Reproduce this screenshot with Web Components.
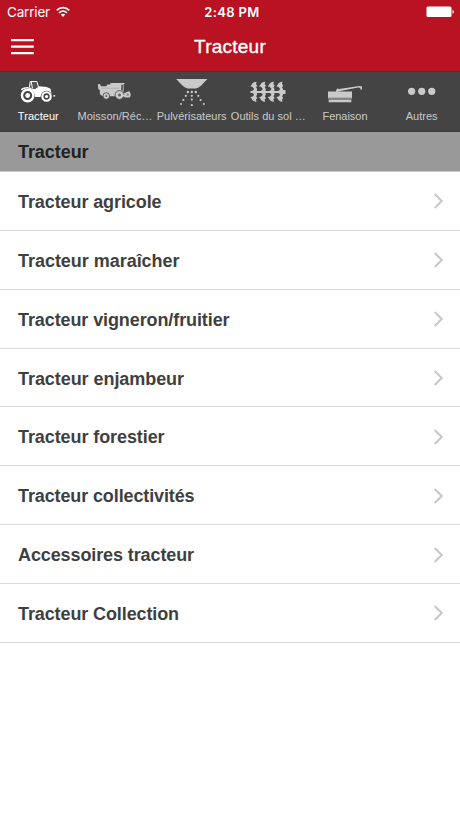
<!DOCTYPE html>
<html lang="fr"><head><meta charset="utf-8"><title>Tracteur</title>
<style>html,body{margin:0;height:100%;background:#fff}body{font-family:"Liberation Sans",Arial,sans-serif;overflow:hidden}</style></head>
<body>
<app-screen>
<status-bar slot="top"></status-bar>
<nav-bar slot="top" label="Tracteur"></nav-bar>
<tab-strip slot="top">
<tab-item label="Tracteur" w="41" active><svg viewBox="18.33 76 40 30"><path fill="currentColor" d="M39 86.3l8 .8 3.8 1.6 1.2 5.3-1.5-.2a5.6 5.6 0 0 0-9.6 3.2h-5.4c-.2-4.5-3-8-7.5-8.4-2.2-.1-4.3.6-5.8 1.8l-1-1.3c1.8-1.4 4-2.2 6.7-2.2l4.6 2.4h3.3z"/><path fill="#555" stroke="currentColor" stroke-width="1" d="M29.6 87.5l1-6h6.6l1.7 5.8-3.3 2.2h-3zM31.5 81.5l1.3 7"/><circle cx="28" cy="95.5" r="5.7" fill="#444" stroke="currentColor" stroke-width="2.4"/><circle cx="28" cy="95.5" r="2.4" fill="currentColor"/><circle cx="46.9" cy="96.5" r="5.7" fill="#444"/><circle cx="46.9" cy="96.5" r="4.2" fill="none" stroke="currentColor" stroke-width="2.1"/><circle cx="46.9" cy="96.5" r="1.6" fill="currentColor"/><circle cx="54.6" cy="95.8" r=".9" fill="currentColor"/></svg></tab-item>
<tab-item label="Moisson/Réc…" w="75"><svg viewBox="95 76 40 30"><path fill="currentColor" d="M97.8 84.2l2.2-.3.8 2.3h5.7l.7-1.8h3.3v-1.5h14v1.2h-.9v7.3l-1.3.9 2.8.9 1.5 1.3-.5 1.2-2.6-.2-1.2.8H102.5l-2.7-2.3V90l-1.4-.8z"/><path fill="#444" d="M121.4 84.8h1.4v5.6h-1.6z"/><path stroke="#999" stroke-width=".5" d="M101 88.2h18"/><g fill="currentColor" stroke="#444" stroke-width=".8"><circle cx="106.3" cy="96" r="3.3"/><circle cx="119.5" cy="95" r="4.4"/></g><circle cx="119.5" cy="95" r="1.5" fill="#666"/><circle cx="106.3" cy="96" r="1" fill="#666"/><circle cx="127.8" cy="94.7" r="2" fill="#777" stroke="currentColor" stroke-width="1.8"/><path fill="none" stroke="currentColor" stroke-width="1.5" d="M122 94.5l4 2.5M128 92.5l1.5-1"/></svg></tab-item>
<tab-item label="Pulvérisateurs" w="70"><svg viewBox="171.67 76 40 30"><path fill="currentColor" d="M175.7 79h31.4c-3.8 3.6-6.7 8.3-11.6 9.5h-8.2c-4.9-1.3-7.6-6-11.6-9.5z"/><g fill="currentColor"><circle cx="187.5" cy="92" r="1.2"/><circle cx="191.5" cy="92" r="1.2"/><circle cx="195.5" cy="92" r="1.2"/><circle cx="185.5" cy="95.8" r="1.1"/><circle cx="191.5" cy="95.8" r="1.1"/><circle cx="198" cy="95.8" r="1.1"/><circle cx="183" cy="100" r="1.1"/><circle cx="191.5" cy="99.6" r="1.1"/><circle cx="200.3" cy="100" r="1.1"/><circle cx="180.7" cy="104" r="1"/><circle cx="191.5" cy="105" r="1.1"/><circle cx="203.5" cy="104" r="1"/></g></svg></tab-item>
<tab-item label="Outils du sol …" w="75"><svg viewBox="248.33 76 40 30"><defs><path id="tine" d="M256.9 81.8c-2.8.2-4.4 1.4-4.9 3l-1.4 1.8 2 .2 1.7 2-.3 1.3-2.5 1.2h5.8v-2.6l-.9-1.4 1.2-1.6-1.3-1.6zM256.9 101.8c-2.8-.2-4.4-1.4-4.9-3l-1.4-1.8 2-.2 1.7-1.7-.3-1.3-2.5-1.2h5.8v2.5l-.9 1.2 1.2 1.6-1.3 1.6z"/></defs><g fill="currentColor"><path d="M250.8 91h31v-1.1h4v4.2h-4v-1.2h-31z"/><use href="#tine"/><use href="#tine" x="8.7"/><use href="#tine" x="17.4"/><use href="#tine" x="26"/></g></svg></tab-item>
<tab-item label="Fenaison" w="45"><svg viewBox="325 76 40 30"><path fill="currentColor" d="M328 91.6h24v7h-24zM328.7 99.4h22.6v2.9h-22.6zM335.7 91.8l1.3-3.2 2 .5 20.5-3 2.5.4v3h-1.7v-1.6l-2-.3-18 3.5z"/><path stroke="#999" stroke-width=".5" d="M328 97.5h24"/></svg></tab-item>
<tab-item label="Autres" w="32"><svg viewBox="401.67 76 40 30"><g fill="currentColor"><circle cx="411.3" cy="91.3" r="3.6"/><circle cx="421.4" cy="91.3" r="3.6"/><circle cx="431.4" cy="91.3" r="3.6"/></g></svg></tab-item>
</tab-strip>
<section-title label="Tracteur"></section-title>
<list-row label="Tracteur agricole" w="143.5"></list-row>
<list-row label="Tracteur maraîcher" w="161.5"></list-row>
<list-row label="Tracteur vigneron/fruitier" w="211.5"></list-row>
<list-row label="Tracteur enjambeur" w="166"></list-row>
<list-row label="Tracteur forestier" w="146.5"></list-row>
<list-row label="Tracteur collectivités" w="176.5"></list-row>
<list-row label="Accessoires tracteur" w="176"></list-row>
<list-row label="Tracteur Collection" w="161"></list-row>
</app-screen>
<script>
class Base extends HTMLElement{
  connectedCallback(){
    this.attachShadow({mode:'open'}).innerHTML=`<style>:host,*{box-sizing:border-box}${this.css()}</style>${this.html()}`;
    this.fit();
  }
  get label(){return this.getAttribute('label')||''}
  // Spread the label's letters so that it takes the requested width.
  fit(){
    const el=this.shadowRoot.querySelector('[data-fit]'),w=parseFloat(this.getAttribute('w')||(el&&el.dataset.fit));
    if(!el||!w)return;
    const n=el.textContent.length;
    el.style.letterSpacing=((w-el.getBoundingClientRect().width)/n).toFixed(3)+'px';
  }
}
customElements.define('app-screen',class extends Base{
  css(){return ':host{display:flex;flex-direction:column;width:460px;height:818px;background:#fff}'}
  html(){return '<slot name="top"></slot><slot></slot>'}
});
customElements.define('status-bar',class extends Base{
  css(){return `:host{display:grid;grid-template-columns:1fr auto 1fr;align-items:center;height:24px;padding:0 5px 0 7px;background:#b91222;color:#fff;font:13.5px Inter,sans-serif}
  .l{display:flex;align-items:center;gap:6px}.t{font-weight:600;font-size:13px;padding-left:2px}.r{display:flex;justify-content:flex-end}svg{display:block}`}
  html(){return `<div class="l"><span data-fit="43">Carrier</span><svg width="14" height="12" viewBox="0 0 14 12" fill="none" stroke="#fff" stroke-width="1.7"><path d="M.8 4.3c3.5-3.6 8.9-3.6 12.4 0M3.1 6.8c2.2-2.2 5.6-2.2 7.8 0"/><path fill="#fff" stroke="none" d="M4.8 8.6c1.2-1.1 3.2-1.1 4.4 0L7 10.9z"/></svg></div>
  <span class="t" style="letter-spacing:.35px">2:48 PM</span><div class="r"><svg width="29" height="12" viewBox="0 0 29 12" fill="#fff"><rect x=".5" y=".5" width="25" height="10.5" rx="1.5"/><path d="M26.5 4c1.8.2 1.8 3.4 0 3.6z"/></svg></div>`}
});
customElements.define('nav-bar',class extends Base{
  css(){return `:host{display:grid;grid-template-columns:1fr auto 1fr;align-items:center;height:47px;padding:0 11px 1px;background:#b91222;color:#fff}
  h1{margin:0;font-size:19px;font-weight:400;line-height:22px;-webkit-text-stroke:.35px #fff}svg{display:block}`}
  html(){return `<svg width="23" height="18" viewBox="0 0 23 18" stroke="#fff" stroke-width="2.3"><path d="M0 2.1h22.8M0 8.6h22.8M0 15.1h22.8"/></svg><h1 data-fit="72">${this.label}</h1><i></i>`}
});
customElements.define('tab-strip',class extends Base{
  css(){return ':host{display:grid;grid-template-columns:repeat(6,minmax(0,1fr));height:61px;background:#444;border-top:1px solid #642a2b;border-bottom:1px solid #3d3d3d}'}
  html(){return '<slot></slot>'}
});
customElements.define('tab-item',class extends Base{
  css(){return `:host{display:flex;flex-direction:column;align-items:center;padding-top:4px;color:#cacaca;font-size:11px;line-height:13px;white-space:nowrap}
  :host([active]){color:#fff}::slotted(svg){display:block;width:40px;height:30px;flex:none}span{margin-top:4px}`}
  html(){return `<slot></slot><span data-fit>${this.label}</span>`}
});
customElements.define('section-title',class extends Base{
  css(){return ':host{display:flex;align-items:center;height:40px;padding:2px 18px 0;background:#999;border-bottom:1px solid #c9c9c9;color:#222;font-size:18px;font-weight:700}'}
  html(){return `<span data-fit="70.5">${this.label}</span>`}
});
customElements.define('list-row',class extends Base{
  css(){return `:host{display:flex;align-items:center;justify-content:space-between;height:58.86px;padding:1px 16px 0 18px;border-bottom:1px solid #d9d9d9;color:#3f3f3f;font-size:18px;font-weight:700}svg{display:block}span{padding-top:2px}`}
  html(){return `<span data-fit>${this.label}</span><svg width="11" height="18" viewBox="0 0 11 18" fill="none" stroke="#c7c7cc" stroke-width="2.1"><path d="M1.7 2l7 7-7 7"/></svg>`}
});
</script>
</body></html>
